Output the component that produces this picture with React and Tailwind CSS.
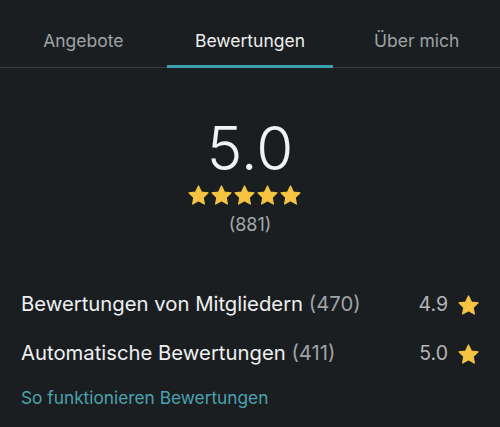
import React from 'react';

const Star = ({ className }) => (
  <svg viewBox="0 0 24 23" className={className} fill="#f6c343">
    <path
      d="M12 1.1L15.29 8.07L22.94 9.05L17.33 14.33L18.76 21.9L12 18.2L5.24 21.9L6.67 14.33L1.06 9.05L8.71 8.07Z"
      strokeLinejoin="round"
      stroke="#f6c343"
      strokeWidth="1.4"
    />
  </svg>
);

const tabs = ['Angebote', 'Bewertungen', 'Über mich'];

const rows = [
  { label: 'Bewertungen von Mitgliedern', count: 470, score: '4.9' },
  { label: 'Automatische Bewertungen', count: 411, score: '5.0' },
];

const App = () => {
  return (
    <div
      className="w-[500px] h-[427px] bg-[#1b1e20] text-[#eef0f1] overflow-hidden"
      style={{ fontFamily: 'Inter, "Noto Sans", sans-serif' }}
    >
      {/* Tabs */}
      <nav className="flex border-b border-[#3a3e41]">
        {tabs.map((tab, i) => (
          <div
            key={tab}
            className={`flex-1 h-[68px] flex items-center justify-center text-[17.5px] pt-[17px] border-b-[3px] -mb-px ${
              i === 1 ? 'border-[#3da0ad] text-[#eceeef]' : 'border-transparent text-[#9ea3a6]'
            }`}
          >
            {tab}
          </div>
        ))}
      </nav>

      {/* Summary */}
      <section className="flex flex-col items-center pt-[50px]">
        <div className="text-[60px] leading-none font-light text-[#f1f2f3]">5.0</div>
        <div className="flex gap-[2px] mt-[7px] mr-[11px]">
          {[0, 1, 2, 3, 4].map((i) => (
            <Star key={i} className="w-[21px] h-[20px]" />
          ))}
        </div>
        <div className="text-[18px] text-[#a3a8ab] mt-[6px]">(881)</div>
      </section>

      {/* Breakdown */}
      <section className="px-[21px] mt-[42px]">
        {rows.map((r) => (
          <div key={r.label} className="flex items-center justify-between h-[49px]">
            <div className="text-[20.3px]">
              {r.label} <span className="text-[#9ea3a6]">({r.count})</span>
            </div>
            <div className="flex items-center gap-[10px]">
              <span className="text-[19.5px] text-[#b3b7ba]">{r.score}</span>
              <Star className="w-[21px] h-[20px]" />
            </div>
          </div>
        ))}
        <a className="block mt-[7px] text-[17.3px] text-[#4aa3ae]">So funktionieren Bewertungen</a>
      </section>
    </div>
  );
};

export default App;
